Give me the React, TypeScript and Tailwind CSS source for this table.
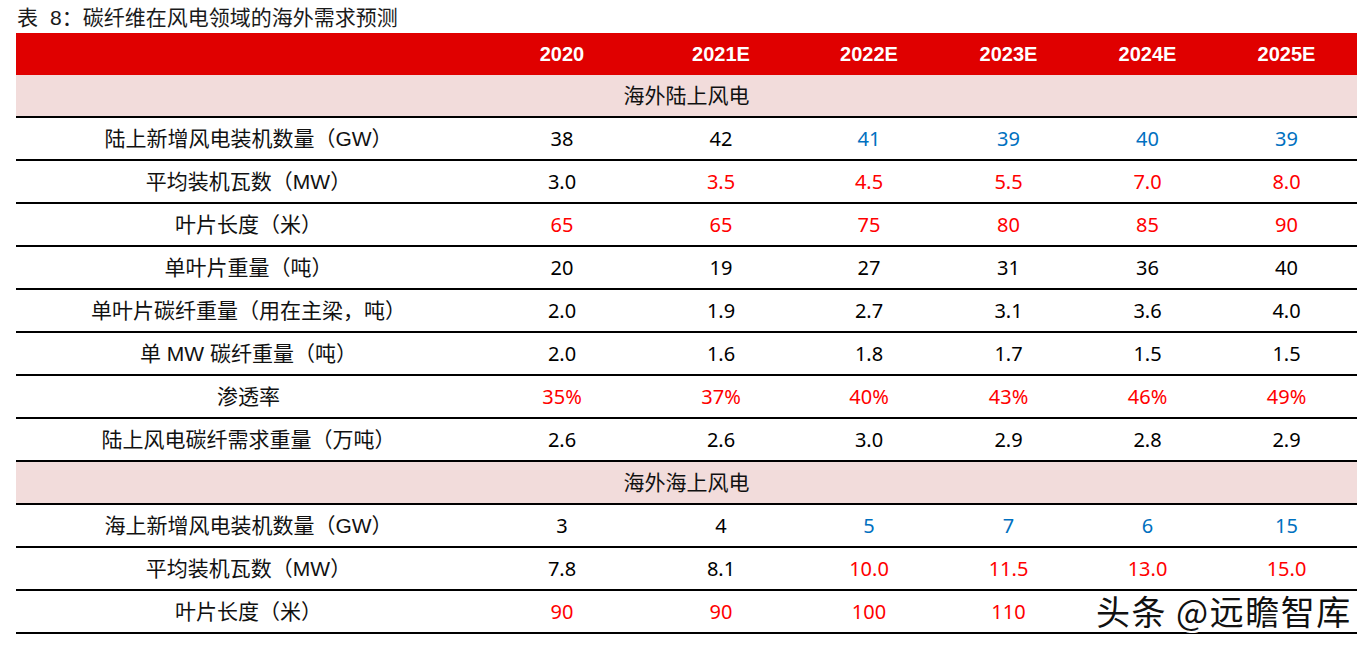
import React from "react";

const K = "text-black";
const B = "text-[#0070c0]";
const R = "text-[#ff0000]";

type Row = { label: string; values: [string, string][] };

const land: Row[] = [
  { label: "陆上新增风电装机数量（GW）", values: [["38", K], ["42", K], ["41", B], ["39", B], ["40", B], ["39", B]] },
  { label: "平均装机瓦数（MW）", values: [["3.0", K], ["3.5", R], ["4.5", R], ["5.5", R], ["7.0", R], ["8.0", R]] },
  { label: "叶片长度（米）", values: [["65", R], ["65", R], ["75", R], ["80", R], ["85", R], ["90", R]] },
  { label: "单叶片重量（吨）", values: [["20", K], ["19", K], ["27", K], ["31", K], ["36", K], ["40", K]] },
  { label: "单叶片碳纤重量（用在主梁，吨）", values: [["2.0", K], ["1.9", K], ["2.7", K], ["3.1", K], ["3.6", K], ["4.0", K]] },
  { label: "单 MW 碳纤重量（吨）", values: [["2.0", K], ["1.6", K], ["1.8", K], ["1.7", K], ["1.5", K], ["1.5", K]] },
  { label: "渗透率", values: [["35%", R], ["37%", R], ["40%", R], ["43%", R], ["46%", R], ["49%", R]] },
  { label: "陆上风电碳纤需求重量（万吨）", values: [["2.6", K], ["2.6", K], ["3.0", K], ["2.9", K], ["2.8", K], ["2.9", K]] },
];

// last two values of the blade row sit under the watermark in the source
const sea: Row[] = [
  { label: "海上新增风电装机数量（GW）", values: [["3", K], ["4", K], ["5", B], ["7", B], ["6", B], ["15", B]] },
  { label: "平均装机瓦数（MW）", values: [["7.8", K], ["8.1", K], ["10.0", R], ["11.5", R], ["13.0", R], ["15.0", R]] },
  { label: "叶片长度（米）", values: [["90", R], ["90", R], ["100", R], ["110", R], ["", R], ["", R]] },
];

const years = ["2020", "2021E", "2022E", "2023E", "2024E", "2025E"];
const cols = "grid grid-cols-[465px_162px_156px_140px_139px_139px_139px]";
const cjk = "font-['Liberation_Sans','Noto_Sans_CJK_SC',sans-serif]";
const num = "font-['Noto_Sans','Noto_Sans_CJK_SC',sans-serif]";

function DataRow({ row }: { row: Row }) {
  return (
    <div className={`${cols} h-[43px] border-b-2 border-black`}>
      <div className={`flex items-center justify-center text-[21px] text-[#111] ${cjk}`}>{row.label}</div>
      {row.values.map(([v, c], i) => (
        <div key={i} className={`flex items-center justify-center text-[20px] ${num} ${c}`}>
          {v}
        </div>
      ))}
    </div>
  );
}

function Section({ title }: { title: string }) {
  return (
    <div className={`h-[43px] bg-[#f2dcdb] border-b-2 border-black flex items-center justify-center text-[21px] text-[#111] ${cjk}`}>
      {title}
    </div>
  );
}

export default function App() {
  return (
    <div className="relative w-[1369px] h-[651px] bg-white overflow-hidden">
      <div className={`h-[33px] pl-[17px] pt-[4px] leading-[28px] text-[21px] text-[#1a1a1a] ${cjk}`}>
        表<span className="ml-[12px]">8：碳纤维在风电领域的海外需求预测</span>
      </div>
      <div className="ml-[16px] w-[1341px]">
        <div className={`${cols} h-[42px] bg-[#e00000]`}>
          <div />
          {years.map((y) => (
            <div key={y} className="flex items-center justify-center text-[20px] font-bold text-white font-['Liberation_Sans',Arial,sans-serif]">
              {y}
            </div>
          ))}
        </div>
        <Section title="海外陆上风电" />
        {land.map((r) => (
          <DataRow key={r.label} row={r} />
        ))}
        <Section title="海外海上风电" />
        {sea.map((r, i) => (
          <DataRow key={i} row={r} />
        ))}
      </div>
      <div className="absolute left-[1096px] top-[588px] text-[34px] leading-[46px] tracking-[1.5px] text-[#111] font-['Noto_Sans_CJK_SC',sans-serif] [text-shadow:2px_2px_0_#fff,-1px_-1px_0_#fff,1px_-1px_0_#fff,-1px_1px_0_#fff,2px_0_0_#fff,0_2px_0_#fff]">
        头条 @远瞻智库
      </div>
    </div>
  );
}
